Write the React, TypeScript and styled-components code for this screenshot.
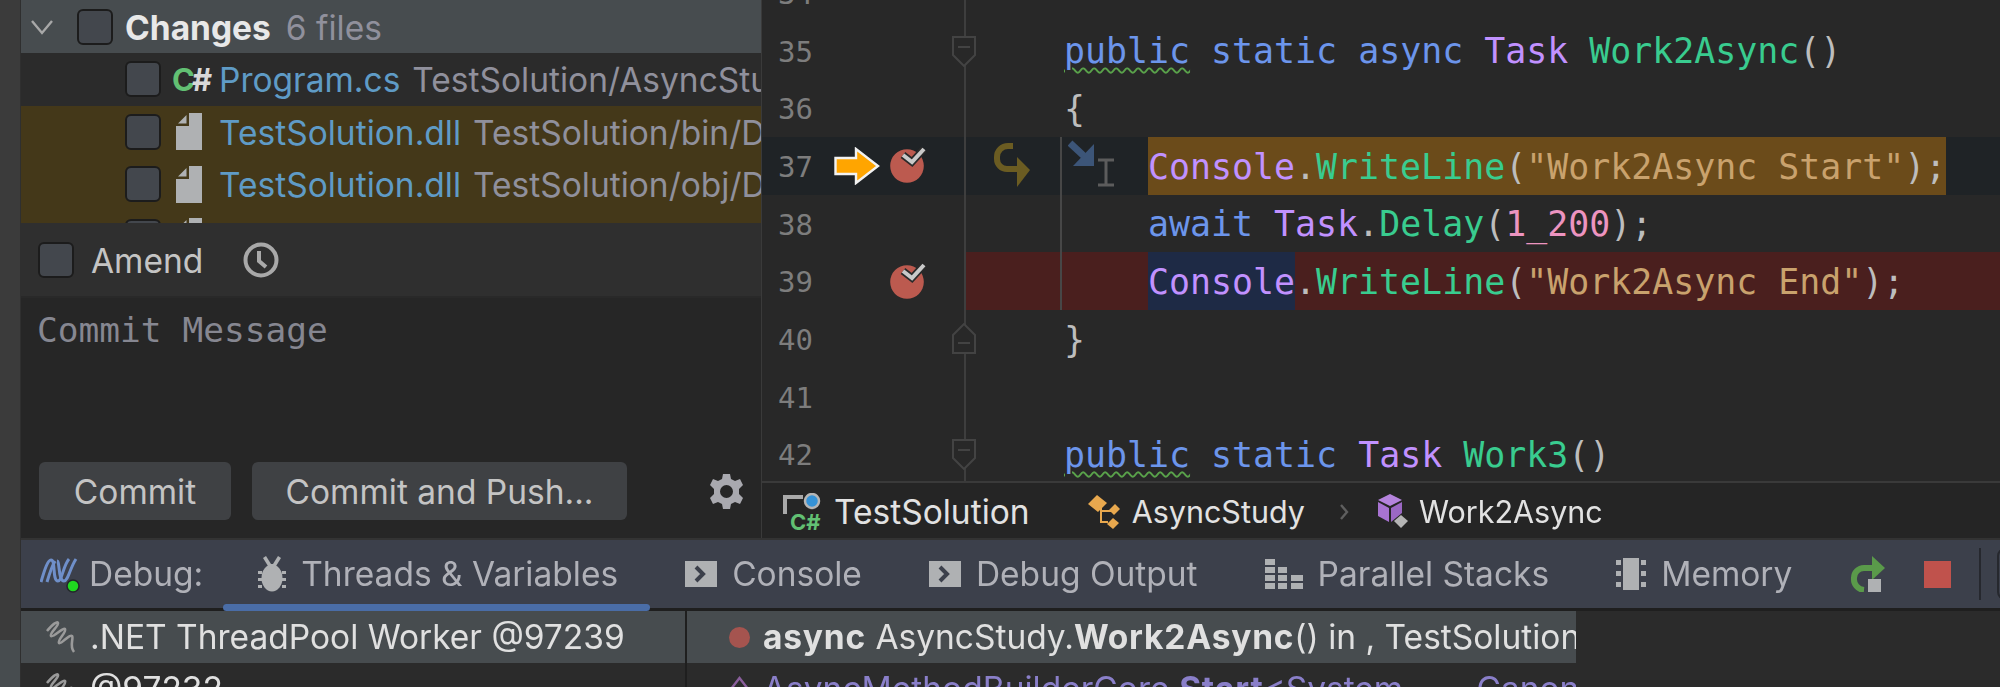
import React from 'react';
import styled, { createGlobalStyle } from 'styled-components';

const GlobalStyle = createGlobalStyle`
  html, body {
    margin: 0;
    padding: 0;
    width: 2000px;
    height: 687px;
    overflow: hidden;
    background: #2b2b2b;
  }
  svg {
    flex: none;
  }
`;

const UI_FONT = `Inter, "Noto Sans", "Liberation Sans", sans-serif`;
const MONO_FONT = `"DejaVu Sans Mono", "Liberation Mono", monospace`;

const Page = styled.div`
  display: flex;
  width: 2000px;
  height: 687px;
  overflow: hidden;
  font-family: ${UI_FONT};
  font-size: 33.5px;
  color: #dfdfdf;
  white-space: nowrap;
  filter: blur(0.5px);
`;

const LeftStrip = styled.div`
  flex: 0 0 21px;
  display: flex;
  flex-direction: column;
  justify-content: flex-end;
  background: #3b3b3b;
  border-right: 1px solid #2f2f2f;
  box-sizing: border-box;
`;

const StripButton = styled.div`
  height: 47px;
  padding-top: 30px;
  box-sizing: border-box;
  background: #474c4f;
`;

const Main = styled.div`
  flex: 1;
  min-width: 0;
  display: flex;
  flex-direction: column;
`;

const TopArea = styled.div`
  flex: 0 0 540px;
  display: flex;
  min-height: 0;
  box-sizing: border-box;
  border-bottom: 2px solid #333333;
`;

/* commit tool window */
const CommitPane = styled.div`
  flex: 0 0 741px;
  display: flex;
  flex-direction: column;
  overflow: hidden;
  border-right: 1px solid #3a3a3a;
  box-sizing: border-box;
`;

const ChangesHeader = styled.div`
  flex: 0 0 53px;
  display: flex;
  align-items: center;
  padding-left: 9px;
  background: #474c4f;
`;

const ChevronSlot = styled.span`
  display: flex;
  margin-right: 23px;
`;

const ChangesTitle = styled.b`
  margin: 2px 0 0 12px;
  font-weight: 700;
  color: #e8e8e8;
`;

const ChangesCount = styled.span`
  margin: 2px 0 0 15px;
  color: #90909c;
`;

const Checkbox = styled.span`
  flex: 0 0 36px;
  height: 36px;
  box-sizing: border-box;
  background: #43474d;
  border: 2px solid #1c1c1c;
  border-radius: 6px;
`;

const FileList = styled.div`
  flex: 0 0 170px;
  overflow: hidden;
  background: #443819;
`;

const FileRow = styled.div<{ $plain?: boolean }>`
  height: 52.5px;
  display: flex;
  align-items: center;
  padding-left: 104px;
  overflow: hidden;
  background: ${(p) => (p.$plain ? '#2b2b2b' : '#443819')};
`;

const FileIconSlot = styled.span<{ $inset?: number }>`
  flex: 0 0 47px;
  box-sizing: border-box;
  margin-left: 11px;
  padding-left: ${(p) => p.$inset ?? 0}px;
  display: flex;
  align-items: center;
`;

const CSharpBadge = styled.span`
  font-size: 31px;
  font-weight: 700;
  letter-spacing: -3px;
  color: #62c073;
  & > i {
    font-style: normal;
    color: #d8d8d8;
  }
`;

const FileName = styled.span`
  margin-top: 2px;
  color: #5f9bc6;
`;

const FilePath = styled.span`
  flex: 1;
  min-width: 0;
  overflow: hidden;
  margin: 2px 0 0 12px;
  color: #90909c;
`;

const AmendRow = styled.div`
  flex: 0 0 75px;
  display: flex;
  align-items: center;
  padding-left: 17px;
  background: #2f2f2f;
  border-bottom: 2px solid #292929;
  box-sizing: border-box;
`;

const AmendLabel = styled.span`
  margin: 3px 0 0 17px;
  color: #c4c4c4;
`;

const ClockSlot = styled.span`
  display: flex;
  margin-left: 40px;
`;

const MessageArea = styled.div`
  flex: 1;
  display: flex;
  flex-direction: column;
  background: #262626;
`;

const MessageText = styled.div`
  flex: 1;
  padding: 7px 0 0 16px;
  font-family: ${MONO_FONT};
  font-size: 34.5px;
  line-height: 50px;
  color: #868791;
`;

const ButtonBar = styled.div`
  display: flex;
  align-items: center;
  gap: 21px;
  padding: 0 18px 18px 18px;
`;

const Button = styled.div<{ $width: number }>`
  width: ${(p) => p.$width}px;
  height: 58px;
  box-sizing: border-box;
  padding-top: 2px;
  display: flex;
  align-items: center;
  justify-content: center;
  background: #3f4144;
  border-radius: 6px;
  color: #c4c4c4;
`;

const GearSlot = styled.span`
  display: flex;
  margin-left: auto;
`;

/* editor */
const EditorPane = styled.div`
  flex: 1;
  min-width: 0;
  display: flex;
  flex-direction: column;
  background: #282828;
`;

const CodeArea = styled.div`
  flex: 0 0 481px;
  overflow: hidden;
  border-bottom: 2px solid #3a3a3a;
  box-sizing: content-box;
`;

const CodeLines = styled.div`
  margin-top: -36px;
`;

const CodeRow = styled.div<{ $current?: boolean }>`
  height: 57.7px;
  display: flex;
  background: ${(p) => (p.$current ? '#1f2326' : 'transparent')};
`;

const Gutter = styled.div`
  flex: 0 0 204px;
  box-sizing: border-box;
  position: relative;
  display: flex;
  align-items: center;
  padding-left: 16px;
  border-right: 2px solid #3e3e3e;
`;

const LineNo = styled.span`
  flex: 0 0 56px;
  padding-top: 2px;
  font-family: ${MONO_FONT};
  font-size: 29px;
  color: #7d7d7d;
`;

const ArrowSlot = styled.span`
  flex: 0 0 56px;
  display: flex;
`;

const BreakpointSlot = styled.span`
  flex: 0 0 38px;
  display: flex;
  margin-top: -1px;
`;

const FoldSlot = styled.span`
  position: absolute;
  right: -13px;
  top: 50%;
  transform: translateY(-50%);
  display: flex;
`;

const StepGutter = styled.div<{ $rule?: boolean; $error?: boolean }>`
  flex: 0 0 96px;
  box-sizing: border-box;
  display: flex;
  align-items: center;
  padding-left: 27px;
  border-right: 2px solid ${(p) => (p.$rule ? '#474747' : 'transparent')};
  background: ${(p) => (p.$error ? '#4a1f1e' : 'transparent')};
`;

const CodeText = styled.div<{ $error?: boolean }>`
  flex: 1;
  position: relative;
  box-sizing: border-box;
  padding: 2.5px 0 0 2px;
  font-family: ${MONO_FONT};
  font-size: 34.9px;
  line-height: 55.2px;
  white-space: pre;
  color: #bdbdbd;
  background: ${(p) => (p.$error ? '#4a1f1e' : 'transparent')};
`;

const Kw = styled.span<{ $warn?: boolean }>`
  color: #6c95eb;
  ${(p) =>
    p.$warn &&
    `text-decoration: underline wavy #59a24a 2px;
     text-underline-offset: 4px;`}
`;
const Ty = styled.span`
  color: #c191ff;
`;
const Fn = styled.span`
  color: #39cc8f;
`;
const Str = styled.span`
  color: #c9a26d;
`;
const Num = styled.span`
  color: #ed94c0;
`;

const Mark = styled.span<{ $bg: string }>`
  display: inline-block;
  margin-top: -2.5px;
  padding-top: 2.5px;
  background: ${(p) => p.$bg};
`;

const CaretMarks = styled.span`
  position: absolute;
  left: 6px;
  top: 3px;
  display: flex;
`;

const Breadcrumb = styled.div`
  flex: 1;
  display: flex;
  align-items: center;
  padding: 2px 0 0 21px;
  background: #252525;
  box-sizing: border-box;
`;

const Crumb = styled.span<{ $gap: number; $left?: number; $small?: boolean }>`
  display: flex;
  align-items: center;
  gap: ${(p) => p.$gap}px;
  margin-left: ${(p) => p.$left ?? 0}px;
  font-size: ${(p) => (p.$small ? 30.5 : 33.5)}px;
  color: #e2e2e2;
`;

const CrumbChevron = styled.span`
  display: flex;
  margin: 0 28px 0 34px;
`;

/* debug tool window */
const DebugBar = styled.div`
  flex: 0 0 68px;
  display: flex;
  align-items: center;
  padding-left: 19px;
  background: #3c404b;
  color: #b0b1b8;
`;

const DebugTitle = styled.span`
  display: flex;
  align-items: center;
  gap: 7px;
  margin-right: 20px;
`;

const Tab = styled.div<{ $active?: boolean }>`
  position: relative;
  align-self: stretch;
  display: flex;
  align-items: center;
  gap: 15px;
  padding: 0 32px 0 35px;
  &::after {
    content: '';
    display: ${(p) => (p.$active ? 'block' : 'none')};
    position: absolute;
    left: 0;
    right: 0;
    bottom: -3px;
    height: 7px;
    border-radius: 4px;
    background: #4a6da7;
  }
`;

const BarActions = styled.div`
  display: flex;
  align-items: center;
  gap: 38px;
  margin-left: 26px;
`;

const BarDivider = styled.span`
  width: 2px;
  height: 52px;
  margin: 0 16px 0 -10px;
  background: #26282e;
`;

const BarEnd = styled.span`
  width: 40px;
  height: 52px;
  margin-left: -38px;
  box-sizing: border-box;
  border: 2px solid #26282e;
  border-radius: 8px;
`;

const DebugBody = styled.div`
  flex: 1;
  display: flex;
  min-height: 0;
  overflow: hidden;
  background: #2b2b2b;
  border-top: 3px solid #1f1f1f;
`;

const ThreadList = styled.div`
  flex: 0 0 664px;
  overflow: hidden;
  border-right: 2px solid #1f1f1f;
  box-sizing: content-box;
`;

const FrameList = styled.div`
  flex: 0 0 889px;
  overflow: hidden;
`;

const ListRow = styled.div<{ $selected?: boolean }>`
  height: 52px;
  display: flex;
  align-items: center;
  padding-left: 24px;
  background: ${(p) => (p.$selected ? '#474c4f' : 'transparent')};
  color: #e0e0e0;
`;

const ThreadName = styled.span`
  margin-left: 11px;
`;

const FrameRow = styled(ListRow)`
  padding-left: 42px;
  overflow: hidden;
  & b {
    letter-spacing: 0.8px;
  }
`;

const FrameDot = styled.span`
  flex: 0 0 21px;
  height: 21px;
  margin-right: 13px;
  border-radius: 50%;
  background: #a5544f;
`;

const FrameGlyph = styled.span`
  display: flex;
  margin-right: 13px;
`;

const FrameCall = styled.span`
  color: #8a7fc9;
`;

const ClippedSeparator = styled.span`
  letter-spacing: 11px;
`;

/* drawings */
const FileGlyph = () => (
  <svg width="26" height="37" viewBox="0 0 26 37">
    <path d="M13 0H26V37H0V13H13Z" fill="#afb1b3" />
    <path d="M2 10.5L10.5 2V10.5Z" fill="#afb1b3" />
  </svg>
);

const Chevron = () => (
  <svg width="24" height="18" viewBox="0 0 24 18" fill="none">
    <path d="M2 3L12 15L22 3" stroke="#a8a8a8" strokeWidth="2.4" />
  </svg>
);

const StripGlyph = () => (
  <svg width="10" height="14" viewBox="0 0 10 14" fill="#c8c8c8">
    <path d="M0 0H8V3H0ZM0 8H6L9 5V8L6 11H0Z" />
  </svg>
);

const ClockGlyph = () => (
  <svg width="36" height="36" viewBox="0 0 36 36" fill="none" stroke="#a9a9a9">
    <circle cx="18" cy="18" r="15.5" strokeWidth="4" />
    <path d="M16 9V19L23 25" strokeWidth="4" />
  </svg>
);

const GearGlyph = () => (
  <svg width="33" height="35" viewBox="0 0 33 35">
    <path
      fill="#a9a9af"
      fillRule="evenodd"
      d="M13 0H20L21 5L25 7L30 5L33 11L29 15V20L33 24L30 30L25 28L21 30L20 35H13L12 30L8 28L3 30L0 24L4 20V15L0 11L3 5L8 7L12 5ZM16.5 11A6.5 6.5 0 1 0 16.5 24A6.5 6.5 0 1 0 16.5 11Z"
    />
  </svg>
);

const ExecArrow = () => (
  <svg width="46" height="38" viewBox="0 0 46 38">
    <path
      d="M1.5 11H22V2L44 19L22 36V27H1.5Z"
      fill="#ffa500"
      stroke="#f2f2f2"
      strokeWidth="2.4"
    />
  </svg>
);

const Breakpoint = () => (
  <svg width="36" height="36" viewBox="0 0 36 36">
    <circle cx="17" cy="19" r="16.8" fill="#bc5a4f" />
    <path d="M13 8L22 15L34 2" fill="none" stroke="#2a2a2a" strokeWidth="7.5" />
    <path d="M13 8L22 15L34 2" fill="none" stroke="#c9c9c9" strokeWidth="4" />
  </svg>
);

const FoldStart = () => (
  <svg width="26" height="32" viewBox="0 0 26 32" fill="#282828" stroke="#434343" strokeWidth="2">
    <path d="M2 2H24V20L13 31L2 20Z" />
    <path d="M7 12H19" />
  </svg>
);

const FoldEnd = () => (
  <svg width="26" height="32" viewBox="0 0 26 32" fill="#282828" stroke="#434343" strokeWidth="2">
    <path d="M2 30H24V12L13 1L2 12Z" />
    <path d="M7 20H19" />
  </svg>
);

const StepOverGlyph = () => (
  <svg width="38" height="46" viewBox="0 0 38 46" fill="none">
    <path d="M20 3H15A11 11 0 0 0 4 14V16A10 10 0 0 0 14 26H26" stroke="#6b5c22" strokeWidth="6" />
    <path d="M24 14L37 27L24 44Z" fill="#6b5c22" />
  </svg>
);

const CaretGlyphs = () => (
  <svg width="50" height="50" viewBox="0 0 50 50" fill="none">
    <path d="M2 3L17 17" stroke="#3c5578" strokeWidth="7" />
    <path d="M26 4V26H5Z" fill="#3c5578" />
    <path d="M30 20H46M38 20V45M30 45H46" stroke="#5c5c5c" strokeWidth="3" />
  </svg>
);

const ProjectGlyph = () => (
  <svg width="38" height="38" viewBox="0 0 38 38">
    <path d="M2 21V4H20" fill="none" stroke="#a9a9a9" strokeWidth="4" />
    <circle cx="29" cy="8" r="7" fill="#3592d6" stroke="#b5b5b5" strokeWidth="2.5" />
    <text x="7" y="37" fontFamily={UI_FONT} fontSize="22" fontWeight="700" fill="#62c073">
      C#
    </text>
  </svg>
);

const ClassGlyph = () => (
  <svg width="34" height="36" viewBox="0 0 34 36">
    <path d="M10 1L20 9L11 18L1 10Z" fill="#e8a84e" />
    <path d="M28 10L33 15L27 21L22 16Z" fill="#e8a84e" />
    <path d="M26 24L32 29L26 35L20 30Z" fill="#e8a84e" />
    <path d="M14 13V28H21M15 17H24" fill="none" stroke="#e8a84e" strokeWidth="2" />
  </svg>
);

const MethodGlyph = () => (
  <svg width="32" height="36" viewBox="0 0 32 36">
    <path d="M13 0L25 6L13 12L1 6Z" fill="#b583dd" />
    <path d="M1 8L12 14V28L1 22Z" fill="#a873d2" />
    <path d="M14 14L25 8V19L14 28Z" fill="#9b68c4" />
    <path d="M24 21L31 27L24 34L17 27Z" fill="#b5b5b5" />
  </svg>
);

const CrumbArrow = () => (
  <svg width="10" height="18" viewBox="0 0 10 18" fill="none">
    <path d="M2 2L8 9L2 16" stroke="#5f5f5f" strokeWidth="2.4" />
  </svg>
);

const DotNetGlyph = () => (
  <svg width="42" height="40" viewBox="0 0 42 40" fill="none">
    <path d="M1 28C5 14 8 6 11 6C16 6 12 27 18 27C22 27 23 12 29 5" stroke="#6f8fc9" strokeWidth="3" />
    <path d="M7 28C10 18 12 12 15 7M17 7C20 7 18 27 24 27C28 27 30 14 36 5" stroke="#6f8fc9" strokeWidth="3" />
    <circle cx="33" cy="32" r="6" fill="#20d820" stroke="#23262b" strokeWidth="1.5" />
  </svg>
);

const BugGlyph = () => (
  <svg width="28" height="36" viewBox="0 0 28 36" fill="#afb1b3">
    <ellipse cx="14" cy="22" rx="10.5" ry="13.5" />
    <path d="M8 0L13 8H15L20 0L23 2L18 10H10L5 2Z" />
    <path d="M0 15H4V18H0ZM24 15H28V18H24ZM0 22H4V25H0ZM24 22H28V25H24ZM0 29H4V32H0ZM24 29H28V32H24Z" />
  </svg>
);

const ConsoleGlyph = () => (
  <svg width="32" height="26" viewBox="0 0 32 26">
    <rect width="32" height="26" fill="#afb1b3" />
    <path d="M11 6L18 13L11 20" fill="none" stroke="#3c404b" strokeWidth="4" />
  </svg>
);

const StacksGlyph = () => (
  <svg width="38" height="30" viewBox="0 0 38 30" fill="#afb1b3">
    <path d="M0 0H10V6H0ZM0 8H10V14H0ZM13 8H22V14H13ZM0 16H10V22H0ZM13 16H22V22H13ZM26 16H38V22H26ZM0 24H10V30H0ZM13 24H22V30H13ZM26 24H38V30H26Z" />
  </svg>
);

const MemoryGlyph = () => (
  <svg width="30" height="32" viewBox="0 0 30 32" fill="#afb1b3">
    <rect x="7" width="16" height="32" />
    <path d="M0 2H5V7H0ZM0 13H5V18H0ZM0 24H5V29H0ZM25 2H30V7H25ZM25 13H30V18H25ZM25 24H30V29H25Z" />
  </svg>
);

const RerunGlyph = () => (
  <svg width="36" height="36" viewBox="0 0 36 36" fill="none">
    <path d="M14 34A11 11 0 0 1 4 22A10 10 0 0 1 14 12H24" stroke="#5a9a4a" strokeWidth="6" />
    <path d="M22 0L35 12L22 24Z" fill="#5a9a4a" />
    <rect x="18" y="23" width="13" height="13" fill="#afb1b3" />
  </svg>
);

const StopGlyph = () => (
  <svg width="27" height="27" viewBox="0 0 27 27">
    <rect width="27" height="27" fill="#c0524c" />
  </svg>
);

const ThreadGlyph = () => (
  <svg width="34" height="34" viewBox="0 0 34 34" fill="none">
    <path
      d="M2 11C8 4 12 1 13 3C14 6 4 13 6 16C8 18 18 7 20 9C22 12 12 20 14 23C16 25 24 14 27 16C29 18 24 26 29 32"
      stroke="#9a9a9a"
      strokeWidth="2.6"
    />
  </svg>
);

const FrameDiamond = () => (
  <svg width="21" height="26" viewBox="0 0 21 26" fill="none">
    <path d="M10.5 2L19 13L10.5 24L2 13Z" stroke="#8a5f9c" strokeWidth="2.4" />
  </svg>
);

const tabs = [
  { label: 'Threads & Variables', icon: <BugGlyph />, active: true },
  { label: 'Console', icon: <ConsoleGlyph /> },
  { label: 'Debug Output', icon: <ConsoleGlyph /> },
  { label: 'Parallel Stacks', icon: <StacksGlyph /> },
  { label: 'Memory', icon: <MemoryGlyph /> },
];

type Line = {
  no: number;
  code?: React.ReactNode;
  fold?: 'start' | 'end';
  exec?: boolean;
  breakpoint?: boolean;
  rule?: boolean;
  error?: boolean;
};

const lines: Line[] = [
  { no: 34 },
  {
    no: 35,
    fold: 'start',
    code: (
      <>
        <Kw $warn>public</Kw> <Kw>static</Kw> <Kw>async</Kw> <Ty>Task</Ty> <Fn>Work2Async</Fn>()
      </>
    ),
  },
  { no: 36, code: '{' },
  {
    no: 37,
    exec: true,
    breakpoint: true,
    rule: true,
    code: (
      <>
        {'    '}
        <Mark $bg="#6b4b1a">
          <Ty>Console</Ty>.<Fn>WriteLine</Fn>(<Str>"Work2Async Start"</Str>);
        </Mark>
      </>
    ),
  },
  {
    no: 38,
    rule: true,
    code: (
      <>
        {'    '}
        <Kw>await</Kw> <Ty>Task</Ty>.<Fn>Delay</Fn>(<Num>1_200</Num>);
      </>
    ),
  },
  {
    no: 39,
    breakpoint: true,
    rule: true,
    error: true,
    code: (
      <>
        {'    '}
        <Mark $bg="#1e2a45">
          <Ty>Console</Ty>
        </Mark>
        .<Fn>WriteLine</Fn>(<Str>"Work2Async End"</Str>);
      </>
    ),
  },
  { no: 40, fold: 'end', code: '}' },
  { no: 41 },
  {
    no: 42,
    fold: 'start',
    code: (
      <>
        <Kw $warn>public</Kw> <Kw>static</Kw> <Ty>Task</Ty> <Fn>Work3</Fn>()
      </>
    ),
  },
];

export default function App() {
  return (
    <>
      <GlobalStyle />
      <Page>
        <LeftStrip>
          <StripButton>
            <StripGlyph />
          </StripButton>
        </LeftStrip>
        <Main>
          <TopArea>
            <CommitPane>
              <ChangesHeader>
                <ChevronSlot>
                  <Chevron />
                </ChevronSlot>
                <Checkbox />
                <ChangesTitle>Changes</ChangesTitle>
                <ChangesCount>6 files</ChangesCount>
              </ChangesHeader>
              <FileList>
                <FileRow $plain>
                  <Checkbox />
                  <FileIconSlot>
                    <CSharpBadge>
                      C<i>#</i>
                    </CSharpBadge>
                  </FileIconSlot>
                  <FileName>Program.cs</FileName>
                  <FilePath>TestSolution/AsyncStudy</FilePath>
                </FileRow>
                <FileRow>
                  <Checkbox />
                  <FileIconSlot $inset={4}>
                    <FileGlyph />
                  </FileIconSlot>
                  <FileName>TestSolution.dll</FileName>
                  <FilePath>TestSolution/bin/Debug/net6.0</FilePath>
                </FileRow>
                <FileRow>
                  <Checkbox />
                  <FileIconSlot $inset={4}>
                    <FileGlyph />
                  </FileIconSlot>
                  <FileName>TestSolution.dll</FileName>
                  <FilePath>TestSolution/obj/Debug/net6.0</FilePath>
                </FileRow>
                <FileRow>
                  <Checkbox />
                  <FileIconSlot $inset={4}>
                    <FileGlyph />
                  </FileIconSlot>
                </FileRow>
              </FileList>
              <AmendRow>
                <Checkbox />
                <AmendLabel>Amend</AmendLabel>
                <ClockSlot>
                  <ClockGlyph />
                </ClockSlot>
              </AmendRow>
              <MessageArea>
                <MessageText>Commit Message</MessageText>
                <ButtonBar>
                  <Button $width={192}>Commit</Button>
                  <Button $width={375}>Commit and Push...</Button>
                  <GearSlot>
                    <GearGlyph />
                  </GearSlot>
                </ButtonBar>
              </MessageArea>
            </CommitPane>
            <EditorPane>
              <CodeArea>
                <CodeLines>
                  {lines.map((line) => (
                    <CodeRow key={line.no} $current={line.exec}>
                      <Gutter>
                        <LineNo>{line.no}</LineNo>
                        <ArrowSlot>{line.exec && <ExecArrow />}</ArrowSlot>
                        <BreakpointSlot>{line.breakpoint && <Breakpoint />}</BreakpointSlot>
                        {line.fold && (
                          <FoldSlot>{line.fold === 'start' ? <FoldStart /> : <FoldEnd />}</FoldSlot>
                        )}
                      </Gutter>
                      <StepGutter $rule={line.rule} $error={line.error}>
                        {line.exec && <StepOverGlyph />}
                      </StepGutter>
                      <CodeText $error={line.error}>
                        {line.exec && (
                          <CaretMarks>
                            <CaretGlyphs />
                          </CaretMarks>
                        )}
                        {line.code}
                      </CodeText>
                    </CodeRow>
                  ))}
                </CodeLines>
              </CodeArea>
              <Breadcrumb>
                <Crumb $gap={13}>
                  <ProjectGlyph />
                  TestSolution
                </Crumb>
                <Crumb $gap={11} $left={57} $small>
                  <ClassGlyph />
                  AsyncStudy
                </Crumb>
                <CrumbChevron>
                  <CrumbArrow />
                </CrumbChevron>
                <Crumb $gap={10} $small>
                  <MethodGlyph />
                  Work2Async
                </Crumb>
              </Breadcrumb>
            </EditorPane>
          </TopArea>
          <DebugBar>
            <DebugTitle>
              <DotNetGlyph />
              Debug:
            </DebugTitle>
            {tabs.map((tab) => (
              <Tab key={tab.label} $active={tab.active}>
                {tab.icon}
                {tab.label}
              </Tab>
            ))}
            <BarActions>
              <RerunGlyph />
              <StopGlyph />
              <BarDivider />
              <BarEnd />
            </BarActions>
          </DebugBar>
          <DebugBody>
            <ThreadList>
              <ListRow $selected>
                <ThreadGlyph />
                <ThreadName>.NET ThreadPool Worker @97239</ThreadName>
              </ListRow>
              <ListRow>
                <ThreadGlyph />
                <ThreadName>@97232</ThreadName>
              </ListRow>
            </ThreadList>
            <FrameList>
              <FrameRow $selected>
                <FrameDot />
                <b>async</b>&nbsp;AsyncStudy.<b>Work2Async</b>() in , TestSolution
              </FrameRow>
              <FrameRow>
                <FrameGlyph>
                  <FrameDiamond />
                </FrameGlyph>
                <FrameCall>
                  AsyncMethodBuilderCore.<b>Start</b>&lt;System<ClippedSeparator>.__</ClippedSeparator>Canon&gt;
                </FrameCall>
              </FrameRow>
            </FrameList>
          </DebugBody>
        </Main>
      </Page>
    </>
  );
}
